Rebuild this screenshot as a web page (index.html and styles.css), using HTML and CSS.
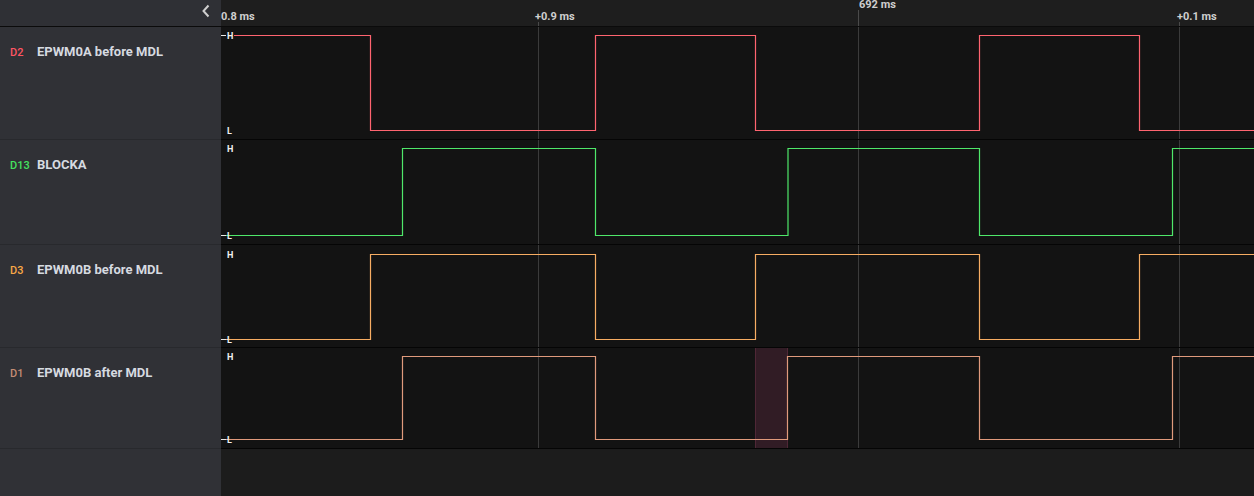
FILE: index.html
```html
<!DOCTYPE html>
<html>
<head>
<meta charset="utf-8">
<link rel="stylesheet" href="styles.css">
</head>
<body>
<div class="app">
  <div class="side-head">
    <svg class="chev" width="10" height="14" viewBox="0 0 10 14"><polyline points="7.5,1.5 2.5,7 7.5,12.5" fill="none" stroke="#cfcfcf" stroke-width="2"/></svg>
  </div>
  <div class="ruler">
    <span class="tl t0">0.8 ms</span>
    <span class="tick k1"></span><span class="tl t1">+0.9 ms</span>
    <span class="tick k2"></span><span class="tl t2">692 ms</span>
    <span class="tick k3"></span><span class="tl t3">+0.1 ms</span>
  </div>

  <div class="label"><span class="code c-red">D2</span><span class="name">EPWM0A before MDL</span></div>
  <div class="wave">
    <svg width="1033" height="112" viewBox="0 0 1033 112">
      <g class="grid"><line x1="317.5" y1="0" x2="317.5" y2="112"/><line x1="637.5" y1="0" x2="637.5" y2="112"/><line x1="958.5" y1="0" x2="958.5" y2="112"/></g>
      <polyline class="sig red" points="0,8.5 149.5,8.5 149.5,103.5 374.5,103.5 374.5,8.5 534.5,8.5 534.5,103.5 758.5,103.5 758.5,8.5 918.5,8.5 918.5,103.5 1033,103.5"/>
      <line class="mk" x1="0" y1="8.5" x2="5" y2="8.5"/><rect class="hb" x="5" y="5" width="8" height="8"/><text class="hl" x="6" y="12">H</text>
      <text class="hl" x="6" y="107">L</text>
    </svg>
  </div>

  <div class="label"><span class="code c-green">D13</span><span class="name">BLOCKA</span></div>
  <div class="wave">
    <svg width="1033" height="104" viewBox="0 0 1033 104">
      <g class="grid"><line x1="317.5" y1="0" x2="317.5" y2="104"/><line x1="637.5" y1="0" x2="637.5" y2="104"/><line x1="958.5" y1="0" x2="958.5" y2="104"/></g>
      <polyline class="sig green" points="0,95.5 181.5,95.5 181.5,8.5 374.5,8.5 374.5,95.5 567,95.5 567,8.5 758.5,8.5 758.5,95.5 951.5,95.5 951.5,8.5 1033,8.5"/>
      <text class="hl" x="6" y="12">H</text>
      <line class="mk" x1="0" y1="95.5" x2="5" y2="95.5"/><text class="hl" x="6" y="99">L</text>
    </svg>
  </div>

  <div class="label"><span class="code c-orange">D3</span><span class="name">EPWM0B before MDL</span></div>
  <div class="wave">
    <svg width="1033" height="102" viewBox="0 0 1033 102">
      <g class="grid"><line x1="317.5" y1="0" x2="317.5" y2="102"/><line x1="637.5" y1="0" x2="637.5" y2="102"/><line x1="958.5" y1="0" x2="958.5" y2="102"/></g>
      <polyline class="sig orange" points="0,94.5 149.5,94.5 149.5,9.5 374.5,9.5 374.5,94.5 534.5,94.5 534.5,9.5 758.5,9.5 758.5,94.5 918.5,94.5 918.5,9.5 1033,9.5"/>
      <text class="hl" x="6" y="13">H</text>
      <line class="mk" x1="0" y1="94.5" x2="5" y2="94.5"/><text class="hl" x="6" y="98">L</text>
    </svg>
  </div>

  <div class="label"><span class="code c-tan">D1</span><span class="name">EPWM0B after MDL</span></div>
  <div class="wave">
    <svg width="1033" height="100" viewBox="0 0 1033 100">
      <rect class="sel" x="534.5" y="-1" width="32" height="102"/>
      <g class="grid"><line x1="317.5" y1="0" x2="317.5" y2="100"/><line x1="637.5" y1="0" x2="637.5" y2="100"/><line x1="958.5" y1="0" x2="958.5" y2="100"/></g>
      <polyline class="sig tan" points="0,91.5 181.5,91.5 181.5,8.5 374.5,8.5 374.5,91.5 566.5,91.5 566.5,8.5 758.5,8.5 758.5,91.5 951.5,91.5 951.5,8.5 1033,8.5"/>
      <text class="hl" x="6" y="12">H</text>
      <line class="mk" x1="0" y1="91.5" x2="5" y2="91.5"/><text class="hl" x="6" y="95">L</text>
    </svg>
  </div>

  <div class="side-fill"></div>
  <div class="wave-fill"></div>
</div>
</body>
</html>
```

FILE: styles.css
```css
* { box-sizing: border-box; }
html, body { margin: 0; padding: 0; background: #1c1c1c; }
body { font-family: Roboto, "Liberation Sans", sans-serif; width: 1254px; height: 496px; overflow: hidden; }

.app {
  display: grid;
  grid-template-columns: 221px 1033px;
  grid-template-rows: 27px 113px 105px 103px 101px 47px;
  height: 496px;
}

.side-head {
  background: #2f3035;
  border-bottom: 1px solid #0b0b0b;
  display: flex;
  justify-content: flex-end;
  align-items: flex-start;
  padding: 4px 10px 0 0;
}
.chev { display: block; }

.ruler {
  position: relative;
  background: #1e1e1e;
  border-bottom: 1px solid #0b0b0b;
}
.tl {
  position: absolute;
  font-size: 11px;
  font-weight: 700;
  color: #cfcfcf;
  line-height: 11px;
  white-space: nowrap;
}
.t0 { left: 0; top: 11px; }
.t1 { left: 314px; top: 11px; }
.t2 { left: 638px; top: -1px; }
.t3 { left: 956px; top: 11px; }
.tick { position: absolute; width: 1px; background: #4a4a4a; bottom: 0; }
.k1 { left: 317px; height: 4px; }
.k2 { left: 637px; height: 16px; }
.k3 { left: 958px; height: 4px; }

.label {
  background: #303136;
  border-bottom: 1px solid #28292d;
  display: flex;
  align-items: baseline;
  padding: 17px 0 0 10px;
}
.code { font-size: 11px; width: 27px; font-weight: 500; }
.name { font-size: 13px; font-weight: 700; color: #d6dae0; }
.c-red { color: #ff5563; }
.c-green { color: #45e05f; }
.c-orange { color: #f8a846; }
.c-tan { color: #c58d74; }

.wave {
  background: #131313;
  border-bottom: 1px solid #050505;
  overflow: hidden;
}
.wave svg { display: block; }
.grid line { stroke: #3b3b3b; stroke-width: 1; }
.sig { fill: none; stroke-width: 1.2; }
.red { stroke: #ff6470; }
.green { stroke: #4fe86a; }
.orange { stroke: #f7ad63; }
.tan { stroke: #e09a7c; }
.mk { stroke: #e8e8e8; stroke-width: 1; }
.hb { fill: #131313; }
.hl { font-family: Roboto, "Liberation Sans", sans-serif; font-size: 9px; font-weight: 700; fill: #f0f0f0; }
.sel { fill: #311c25; stroke: #4f2736; stroke-width: 1; }

.side-fill { background: #303136; }
.wave-fill { background: #1c1c1c; }
```
